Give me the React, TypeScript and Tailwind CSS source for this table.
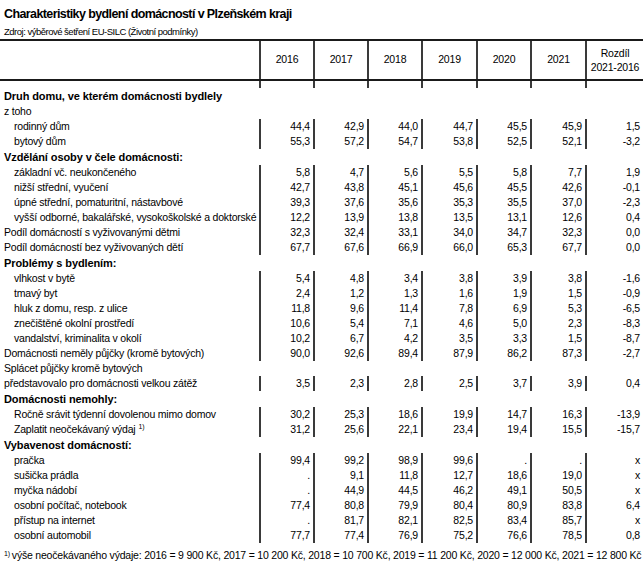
import React from "react";

type Row = { label: string; values?: string[]; bold?: boolean; indent?: boolean; note?: boolean };

const rows: Row[] = [
  { label: "Druh domu, ve kterém domácnosti bydlely", bold: true },
  { label: "z toho" },
  { label: "rodinný dům", indent: true, values: ["44,4", "42,9", "44,0", "44,7", "45,5", "45,9", "1,5"] },
  { label: "bytový dům", indent: true, values: ["55,3", "57,2", "54,7", "53,8", "52,5", "52,1", "-3,2"] },
  { label: "Vzdělání osoby v čele domácnosti:", bold: true },
  { label: "základní vč. neukončeného", indent: true, values: ["5,8", "4,7", "5,6", "5,5", "5,8", "7,7", "1,9"] },
  { label: "nižší střední, vyučení", indent: true, values: ["42,7", "43,8", "45,1", "45,6", "45,5", "42,6", "-0,1"] },
  { label: "úpné střední, pomaturitní, nástavbové", indent: true, values: ["39,3", "37,6", "35,6", "35,3", "35,5", "37,0", "-2,3"] },
  { label: "vyšší odborné, bakalářské, vysokoškolské a doktorské", indent: true, values: ["12,2", "13,9", "13,8", "13,5", "13,1", "12,6", "0,4"] },
  { label: "Podíl domácností s vyživovanými dětmi", values: ["32,3", "32,4", "33,1", "34,0", "34,7", "32,3", "0,0"] },
  { label: "Podíl domácností bez vyživovaných dětí", values: ["67,7", "67,6", "66,9", "66,0", "65,3", "67,7", "0,0"] },
  { label: "Problémy s bydlením:", bold: true },
  { label: "vlhkost v bytě", indent: true, values: ["5,4", "4,8", "3,4", "3,8", "3,9", "3,8", "-1,6"] },
  { label: "tmavý byt", indent: true, values: ["2,4", "1,2", "1,3", "1,6", "1,9", "1,5", "-0,9"] },
  { label: "hluk z domu, resp. z ulice", indent: true, values: ["11,8", "9,6", "11,4", "7,8", "6,9", "5,3", "-6,5"] },
  { label: "znečištěné okolní prostředí", indent: true, values: ["10,6", "5,4", "7,1", "4,6", "5,0", "2,3", "-8,3"] },
  { label: "vandalství, kriminalita v okolí", indent: true, values: ["10,2", "6,7", "4,2", "3,5", "3,3", "1,5", "-8,7"] },
  { label: "Domácnosti neměly půjčky (kromě bytových)", values: ["90,0", "92,6", "89,4", "87,9", "86,2", "87,3", "-2,7"] },
  { label: "Splácet půjčky kromě bytových" },
  { label: "představovalo pro domácnosti velkou zátěž", values: ["3,5", "2,3", "2,8", "2,5", "3,7", "3,9", "0,4"] },
  { label: "Domácnosti nemohly:", bold: true },
  { label: "Ročně srávit týdenní dovolenou mimo domov", indent: true, values: ["30,2", "25,3", "18,6", "19,9", "14,7", "16,3", "-13,9"] },
  { label: "Zaplatit neočekávaný výdaj", indent: true, note: true, values: ["31,2", "25,6", "22,1", "23,4", "19,4", "15,5", "-15,7"] },
  { label: "Vybavenost domácností:", bold: true },
  { label: "pračka", indent: true, values: ["99,4", "99,2", "98,9", "99,6", ".", ".", "x"] },
  { label: "sušička prádla", indent: true, values: [".", "9,1", "11,8", "12,7", "18,6", "19,0", "x"] },
  { label: "myčka nádobí", indent: true, values: [".", "44,9", "44,5", "46,2", "49,1", "50,5", "x"] },
  { label: "osobní počítač, notebook", indent: true, values: ["77,4", "80,8", "79,9", "80,4", "80,9", "83,8", "6,4"] },
  { label: "přístup na internet", indent: true, values: [".", "81,7", "82,1", "82,5", "83,4", "85,7", "x"] },
  { label: "osobní automobil", indent: true, values: ["77,7", "77,4", "76,9", "75,2", "76,6", "78,5", "0,8"] },
];

const years = ["2016", "2017", "2018", "2019", "2020", "2021"];
// widths of the six year columns (border included)
const colW = ["w-[54px]", "w-[54px]", "w-[54px]", "w-[55px]", "w-[54px]", "w-[55px]"];

function Cells({ values }: { values?: string[] }) {
  return (
    <>
      {colW.map((w, i) => (
        <div key={i} className={`${w} shrink-0 border-l-2 border-[#3a3a3a] pr-[3px] text-right`}>
          {values?.[i] ?? ""}
        </div>
      ))}
      <div className="flex-1 border-l-2 border-[#3a3a3a] pr-[3px] text-right">{values?.[6] ?? ""}</div>
    </>
  );
}

export default function App() {
  return (
    <div className="w-[643px] h-[567px] bg-white text-black overflow-hidden" style={{ fontFamily: '"Liberation Sans", Arial, sans-serif' }}>
      <div className="pl-[4px] pt-[6px] text-[12.5px] font-bold leading-[17px] tracking-[-0.6px]">Charakteristiky bydlení domácností v Plzeňském kraji</div>
      <div className="pl-[4px] pt-[2px] text-[9.5px] leading-[13px] tracking-[-0.5px]">Zdroj: výběrové šetření EU-SILC (Životní podmínky)</div>

      {/* table */}
      <div className="mt-[1px] border-t-2 border-[#1a1a1a] text-[10.5px] tracking-[-0.2px]">
        <div className="flex h-[40px] border-b-2 border-[#1a1a1a]">
          <div className="w-[259px] shrink-0" />
          {years.map((y, i) => (
            <div key={y} className={`${colW[i]} shrink-0 border-l-2 border-[#3a3a3a] flex items-center justify-center`}>
              {y}
            </div>
          ))}
          <div className="flex-1 border-l-2 border-[#3a3a3a] flex flex-col items-center justify-center leading-[14px]">
            <span>Rozdíl</span>
            <span>2021-2016</span>
          </div>
        </div>

        <div className="flex h-[7px]">
          <div className="w-[259px] shrink-0" />
          <Cells />
        </div>

        {rows.map((r, idx) => (
          <div key={idx} className={`flex items-center ${r.bold ? "h-[16px]" : "h-[15px]"}`}>
            <div
              className={`w-[259px] shrink-0 whitespace-nowrap ${r.indent ? "pl-[14px]" : "pl-[4px]"} ${r.bold ? "font-bold text-[11px] tracking-[-0.1px]" : ""}`}
            >
              {r.label}
              {r.note && <sup className="ml-[3px] text-[7px]">1)</sup>}
            </div>
            <div className="flex self-stretch items-center flex-1">
              <Cells values={r.values} />
            </div>
          </div>
        ))}
      </div>

      <div className="pl-[4px] pt-[5px] text-[10.5px] tracking-[-0.2px] whitespace-nowrap">
        <sup className="text-[7px] mr-[2px]">1)</sup>
        výše neočekávaného výdaje: 2016 = 9 900 Kč, 2017 = 10 200 Kč, 2018 = 10 700 Kč, 2019 = 11 200 Kč, 2020 = 12 000 Kč, 2021 = 12 800 Kč
      </div>
    </div>
  );
}
